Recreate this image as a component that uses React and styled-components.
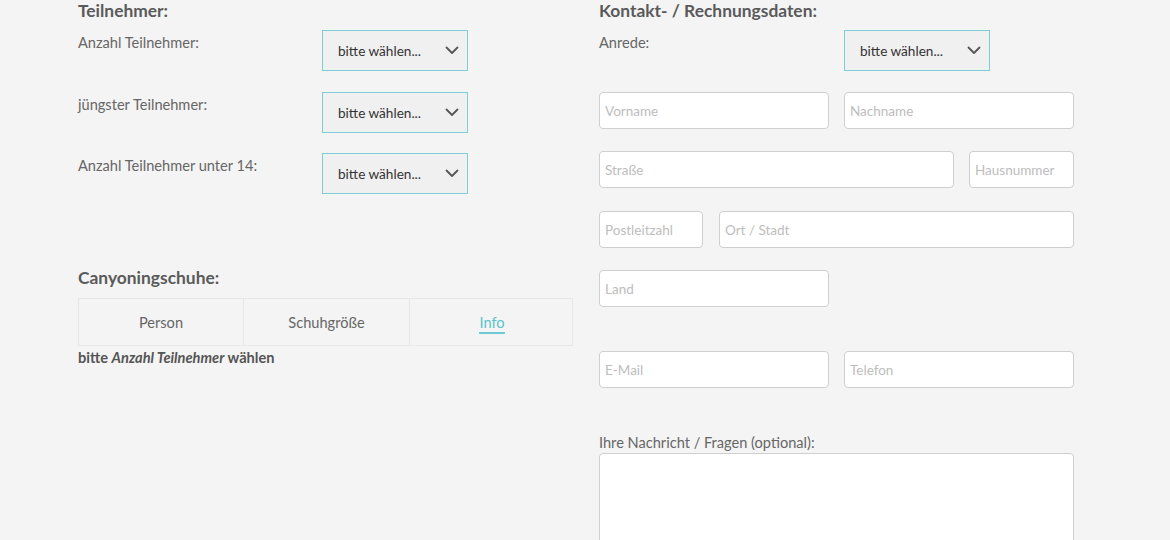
import styled, { createGlobalStyle } from "styled-components";

const GlobalStyle = createGlobalStyle`
  html, body {
    margin: 0;
    padding: 0;
    background: #f4f4f4;
    font-family: Lato, "Open Sans", sans-serif;
    color: #666;
  }
  * { box-sizing: border-box; }
`;

const Page = styled.div`
  display: grid;
  grid-template-columns: 495px 475px;
  column-gap: 26px;
  padding-left: 78px;
  height: 540px;
  overflow: hidden;
`;

const Column = styled.div`
  display: flex;
  flex-direction: column;
`;

const Heading = styled.h2`
  margin: 0 0 ${(p) => p.$mb || 8}px;
  font-size: 17.4px;
  line-height: 22px;
  font-weight: 700;
  color: #5a5a5a;
`;

const SelectRow = styled.div`
  display: flex;
  align-items: flex-start;
  margin-bottom: ${(p) => p.$mb ?? 21}px;
`;

const Label = styled.div`
  width: ${(p) => p.$w || 244}px;
  flex-shrink: 0;
  padding-top: 3px;
  font-size: 14.6px;
  line-height: 20px;
  color: #666;
`;

const SelectBox = styled.div`
  width: 146px;
  height: 41px;
  border: 1px solid #7ccfd6;
  background: #f0f0f0;
  display: flex;
  align-items: center;
  justify-content: space-between;
  padding: 0 8px 0 15px;
  font-size: 13.6px;
  color: #333;
`;

const Chevron = () => (
  <svg width="14" height="9" viewBox="0 0 14 9" fill="none">
    <path d="M1.5 1.5 L7 7 L12.5 1.5" stroke="#555" strokeWidth="1.8" strokeLinecap="round" strokeLinejoin="round" />
  </svg>
);

const Select = () => (
  <SelectBox>
    <span>bitte wählen...</span>
    <Chevron />
  </SelectBox>
);

const Table = styled.div`
  display: grid;
  grid-template-columns: 164px 166px 165px;
  border: 1px solid #e7e7e7;
  height: 48px;
`;

const Cell = styled.div`
  display: flex;
  align-items: center;
  justify-content: center;
  font-size: 14.6px;
  color: #666;
  border-left: ${(p) => (p.$first ? "none" : "1px solid #e7e7e7")};
`;

const InfoLink = styled.span`
  color: #5cc3cd;
  border-bottom: 2px solid #6ccbd4;
  padding-bottom: 1px;
  margin-top: 3px;
`;

const Hint = styled.div`
  margin-top: 2px;
  font-size: 14.6px;
  line-height: 20px;
  font-weight: 700;
  color: #555;

  em {
    font-style: italic;
  }
`;

const FieldRow = styled.div`
  display: flex;
  gap: ${(p) => p.$gap || 15}px;
  margin-bottom: ${(p) => p.$mb ?? 22}px;
`;

const Input = styled.input`
  width: ${(p) => p.$w}px;
  height: 37px;
  border: 1px solid #cfcfcf;
  border-radius: 4px;
  background: #fff;
  padding: 0 5px;
  font-family: inherit;
  font-size: 13.5px;
  color: #333;
  outline: none;

  &::placeholder {
    color: #bdbdbd;
  }
`;

const TextLabel = styled.div`
  font-size: 14.6px;
  line-height: 20px;
  color: #666;
`;

const TextArea = styled.textarea`
  width: 475px;
  height: 130px;
  border: 1px solid #cfcfcf;
  border-radius: 4px;
  background: #fff;
  resize: none;
  font-family: inherit;
  outline: none;
`;

export default function App() {
  return (
    <>
      <GlobalStyle />
      <Page>
        <Column>
          <Heading>Teilnehmer:</Heading>
          <SelectRow>
            <Label>Anzahl Teilnehmer:</Label>
            <Select />
          </SelectRow>
          <SelectRow $mb={20}>
            <Label>jüngster Teilnehmer:</Label>
            <Select />
          </SelectRow>
          <SelectRow $mb={73}>
            <Label>Anzahl Teilnehmer unter 14:</Label>
            <Select />
          </SelectRow>
          <Heading $mb={9}>Canyoningschuhe:</Heading>
          <Table>
            <Cell $first>Person</Cell>
            <Cell>Schuhgröße</Cell>
            <Cell>
              <InfoLink>Info</InfoLink>
            </Cell>
          </Table>
          <Hint>
            bitte <em>Anzahl Teilnehmer</em> wählen
          </Hint>
        </Column>
        <Column>
          <Heading>Kontakt- / Rechnungsdaten:</Heading>
          <SelectRow>
            <Label $w={245}>Anrede:</Label>
            <Select />
          </SelectRow>
          <FieldRow>
            <Input $w={230} placeholder="Vorname" />
            <Input $w={230} placeholder="Nachname" />
          </FieldRow>
          <FieldRow $mb={23}>
            <Input $w={355} placeholder="Straße" />
            <Input $w={105} placeholder="Hausnummer" />
          </FieldRow>
          <FieldRow $gap={16}>
            <Input $w={104} placeholder="Postleitzahl" />
            <Input $w={355} placeholder="Ort / Stadt" />
          </FieldRow>
          <FieldRow $mb={44}>
            <Input $w={230} placeholder="Land" />
          </FieldRow>
          <FieldRow $mb={45}>
            <Input $w={230} placeholder="E-Mail" />
            <Input $w={230} placeholder="Telefon" />
          </FieldRow>
          <TextLabel>Ihre Nachricht / Fragen (optional):</TextLabel>
          <TextArea />
        </Column>
      </Page>
    </>
  );
}
